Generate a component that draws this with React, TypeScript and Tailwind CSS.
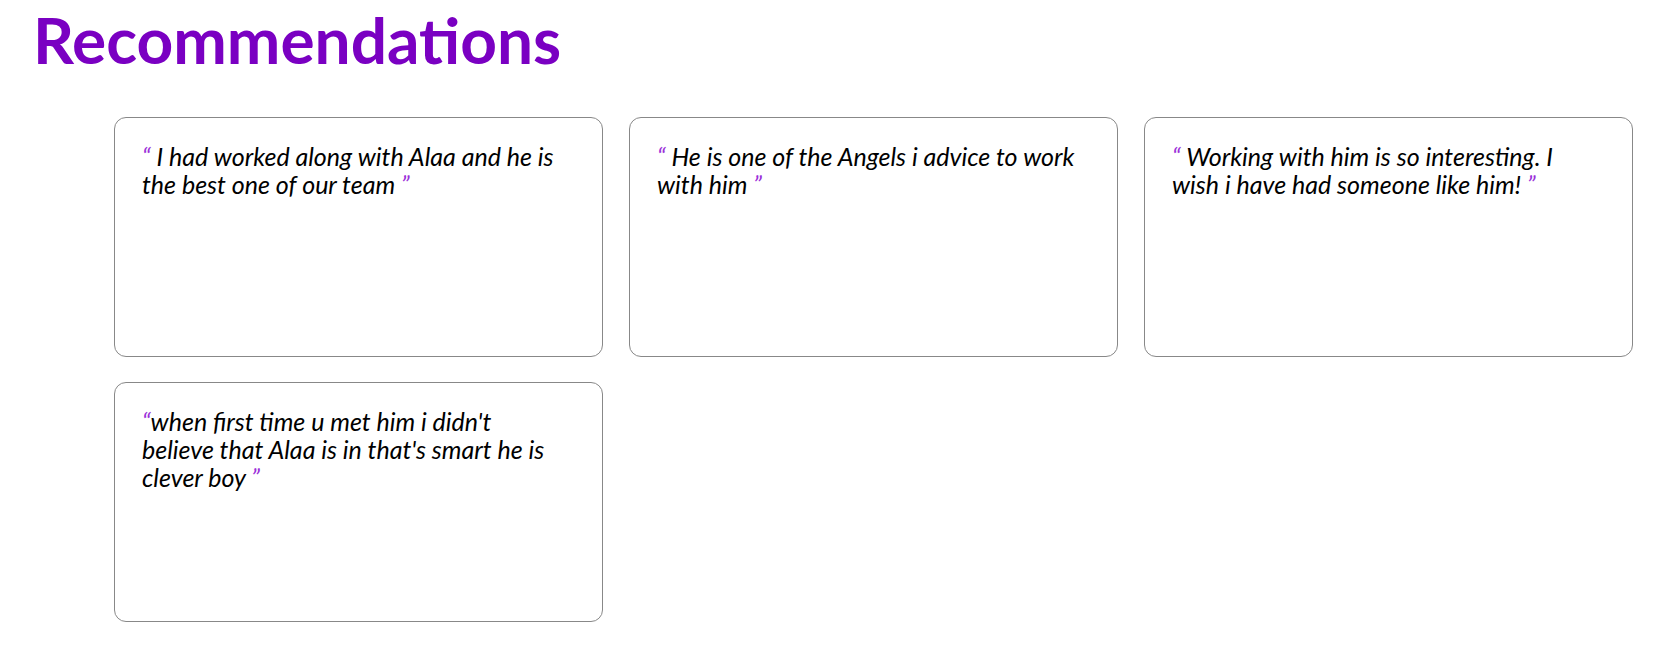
const recommendations = [
  { id: 1, text: 'I had worked along with Alaa and he is the best one of our team', space: true },
  { id: 2, text: 'He is one of the Angels i advice to work with him', space: true },
  { id: 3, text: 'Working with him is so interesting. I wish i have had someone like him!', space: true },
  { id: 4, text: "when first time u met him i didn't believe that Alaa is in that's smart he is clever boy", space: false },
];

export default function App() {
  return (
    <div className="min-h-screen bg-white font-['Lato',sans-serif]">
      {/* Title */}
      <h1 className="pl-[33px] pt-[3px] text-[64px] font-bold leading-[1.15] text-[#7a00c2]">
        Recommendations
      </h1>

      {/* Cards */}
      <div className="mt-[40px] grid grid-cols-3 gap-x-[26px] gap-y-[25px] pl-[114px] pr-[44px]">
        {recommendations.map((item) => (
          <div
            key={item.id}
            className="h-[240px] rounded-[12px] border border-[#888888] bg-white pl-[27px] pr-[37px] pt-[24px]"
          >
            <p className="text-[25px] italic leading-[28px] text-black">
              <span className="text-[#9b30d9]">&ldquo;</span>
              {item.space ? ' ' : ''}
              {item.text}{' '}
              <span className="text-[#9b30d9]">&rdquo;</span>
            </p>
          </div>
        ))}
      </div>
    </div>
  );
}
